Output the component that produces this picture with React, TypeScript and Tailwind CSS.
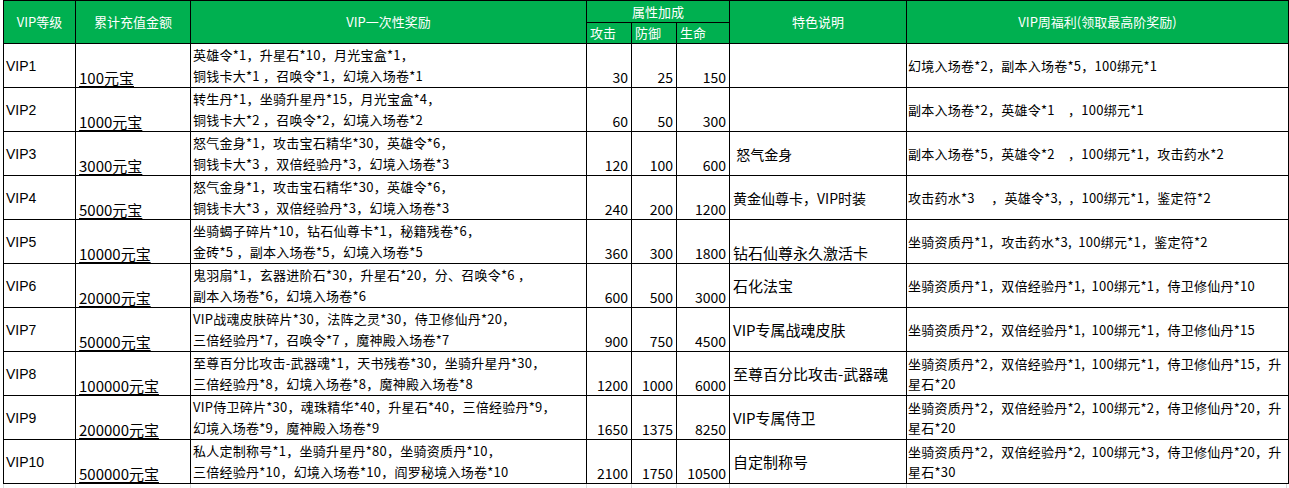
import React from "react";

type Row = {
  level: string;
  amount: string;
  reward: [string, string];
  atk: string;
  def: string;
  hp: string;
  feature: string;
  featureBottom?: boolean;
  featureSmall?: boolean;
  weekly: string[];
};

const rows: Row[] = [
  {
    level: "VIP1",
    amount: "100元宝",
    reward: ["英雄令*1，升星石*10，月光宝盒*1，", "铜钱卡大*1 ，召唤令*1，幻境入场卷*1"],
    atk: "30",
    def: "25",
    hp: "150",
    feature: "",
    weekly: ["幻境入场卷*2，副本入场卷*5，100绑元*1"],
  },
  {
    level: "VIP2",
    amount: "1000元宝",
    reward: ["转生丹*1，坐骑升星丹*15，月光宝盒*4，", "铜钱卡大*2 ，召唤令*2，幻境入场卷*2"],
    atk: "60",
    def: "50",
    hp: "300",
    feature: "",
    weekly: ["副本入场卷*2，英雄令*1　，100绑元*1"],
  },
  {
    level: "VIP3",
    amount: "3000元宝",
    reward: ["怒气金身*1，攻击宝石精华*30，英雄令*6，", "铜钱卡大*3 ，双倍经验丹*3，幻境入场卷*3"],
    atk: "120",
    def: "100",
    hp: "600",
    feature: " 怒气金身",
    featureSmall: true,
    weekly: ["副本入场卷*5，英雄令*2　，100绑元*1，攻击药水*2"],
  },
  {
    level: "VIP4",
    amount: "5000元宝",
    reward: ["怒气金身*1，攻击宝石精华*30，英雄令*6，", "铜钱卡大*3 ，双倍经验丹*3，幻境入场卷*3"],
    atk: "240",
    def: "200",
    hp: "1200",
    feature: "黄金仙尊卡，VIP时装",
    featureSmall: true,
    weekly: ["攻击药水*3　 ，英雄令*3,  ，100绑元*1，鉴定符*2"],
  },
  {
    level: "VIP5",
    amount: "10000元宝",
    reward: ["坐骑蝎子碎片*10，钻石仙尊卡*1，秘籍残卷*6，", "金砖*5 ，副本入场卷*5，幻境入场卷*5"],
    atk: "360",
    def: "300",
    hp: "1800",
    feature: "钻石仙尊永久激活卡",
    featureBottom: true,
    weekly: ["坐骑资质丹*1，攻击药水*3,  100绑元*1，鉴定符*2"],
  },
  {
    level: "VIP6",
    amount: "20000元宝",
    reward: ["鬼羽扇*1，玄器进阶石*30，升星石*20，分、召唤令*6 ，", "副本入场卷*6，幻境入场卷*6"],
    atk: "600",
    def: "500",
    hp: "3000",
    feature: "石化法宝",
    weekly: ["坐骑资质丹*1，双倍经验丹*1,  100绑元*1，侍卫修仙丹*10"],
  },
  {
    level: "VIP7",
    amount: "50000元宝",
    reward: ["VIP战魂皮肤碎片*30，法阵之灵*30，侍卫修仙丹*20，", "三倍经验丹*7，召唤令*7 ，魔神殿入场卷*7"],
    atk: "900",
    def: "750",
    hp: "4500",
    feature: "VIP专属战魂皮肤",
    weekly: ["坐骑资质丹*2，双倍经验丹*1,  100绑元*1，侍卫修仙丹*15"],
  },
  {
    level: "VIP8",
    amount: "100000元宝",
    reward: ["至尊百分比攻击-武器魂*1，天书残卷*30，坐骑升星丹*30，", "三倍经验丹*8，幻境入场卷*8，魔神殿入场卷*8"],
    atk: "1200",
    def: "1000",
    hp: "6000",
    feature: "至尊百分比攻击-武器魂",
    weekly: ["坐骑资质丹*2，双倍经验丹*1,  100绑元*1，侍卫修仙丹*15，升", "星石*20"],
  },
  {
    level: "VIP9",
    amount: "200000元宝",
    reward: ["VIP侍卫碎片*30，魂珠精华*40，升星石*40，三倍经验丹*9，", "幻境入场卷*9，魔神殿入场卷*9"],
    atk: "1650",
    def: "1375",
    hp: "8250",
    feature: "VIP专属侍卫",
    weekly: ["坐骑资质丹*2，双倍经验丹*2,  100绑元*2，侍卫修仙丹*20，升", "星石*20"],
  },
  {
    level: "VIP10",
    amount: "500000元宝",
    reward: ["私人定制称号*1，坐骑升星丹*80，坐骑资质丹*10，", "三倍经验丹*10，幻境入场卷*10，阎罗秘境入场卷*10"],
    atk: "2100",
    def: "1750",
    hp: "10500",
    feature: "自定制称号",
    weekly: ["坐骑资质丹*2，双倍经验丹*2,  100绑元*3，侍卫修仙丹*20，升", "星石*30"],
  },
];

const th =
  "border border-black bg-[#00b050] text-white font-normal text-[13px] leading-[20px] p-0 align-middle";

export default function App() {
  return (
    <div className="w-[1289px] h-[488px] bg-white font-['Noto_Sans_CJK_SC',sans-serif] text-black overflow-hidden">
      <div className="pl-[3px]">
        <table className="table-fixed border-collapse w-[1285px]">
          <colgroup>
            <col className="w-[72px]" />
            <col className="w-[115px]" />
            <col className="w-[396px]" />
            <col className="w-[45px]" />
            <col className="w-[45px]" />
            <col className="w-[53px]" />
            <col className="w-[177px]" />
            <col className="w-[382px]" />
          </colgroup>
          <thead>
            <tr className="h-[22px]">
              <th rowSpan={2} className={th + " text-center"}>VIP等级</th>
              <th rowSpan={2} className={th + " text-center"}>累计充值金额</th>
              <th rowSpan={2} className={th + " text-center"}>VIP一次性奖励</th>
              <th colSpan={3} className={th + " text-center h-[22px]"}>属性加成</th>
              <th rowSpan={2} className={th + " text-center"}>特色说明</th>
              <th rowSpan={2} className={th + " text-center"}>VIP周福利(领取最高阶奖励)</th>
            </tr>
            <tr className="h-[21px]">
              <th className={th + " text-left pl-[3px] h-[21px]"}>攻击</th>
              <th className={th + " text-left pl-[3px]"}>防御</th>
              <th className={th + " text-left pl-[3px]"}>生命</th>
            </tr>
          </thead>
          <tbody>
            {rows.map((r) => (
              <tr key={r.level} className="h-[44px]">
                <td className="border border-black p-0 pl-[2px] align-middle font-['Liberation_Sans','Noto_Sans_CJK_SC',sans-serif] text-[14px] leading-[18px]">
                  {r.level}
                </td>
                <td className="border border-black p-0 pl-[3px] align-bottom text-[15px] leading-[19px] underline underline-offset-[2px] decoration-1">
                  {r.amount}
                </td>
                <td className="border border-black p-0 pl-[2px] align-top text-[13px] leading-[21px] tracking-[0.25px] whitespace-pre overflow-hidden">
                  <div>{r.reward[0]}</div>
                  <div>{r.reward[1]}</div>
                </td>
                <td className="border border-black p-0 pr-[3px] align-bottom text-right text-[14px] leading-[19px]">
                  {r.atk}
                </td>
                <td className="border border-black p-0 pr-[3px] align-bottom text-right text-[14px] leading-[19px]">
                  {r.def}
                </td>
                <td className="border border-black p-0 pr-[3px] align-bottom text-right text-[14px] leading-[19px]">
                  {r.hp}
                </td>
                <td
                  className={
                    "border border-black p-0 pl-[3px] whitespace-pre overflow-hidden " +
                    (r.featureBottom ? "align-bottom leading-[20px] " : "align-middle leading-[20px] ") +
                    (r.featureSmall ? "text-[14px]" : "text-[15px]")
                  }
                >
                  {r.feature}
                </td>
                <td className="border border-black p-0 pl-[1px] align-middle text-[13px] leading-[20px] tracking-[0.25px] whitespace-pre overflow-hidden">
                  {r.weekly.map((w, i) => (
                    <div key={i}>{w}</div>
                  ))}
                </td>
              </tr>
            ))}
          </tbody>
        </table>
        <div className="flex h-[6px]">
          <div className="w-[72px] border-l border-[#d9d9d9]" />
          <div className="w-[115px] border-l border-[#d9d9d9]" />
          <div className="w-[396px] border-l border-[#d9d9d9]" />
          <div className="w-[45px] border-l border-[#d9d9d9]" />
          <div className="w-[45px] border-l border-[#d9d9d9]" />
          <div className="w-[53px] border-l border-[#d9d9d9]" />
          <div className="w-[177px] border-l border-[#d9d9d9]" />
          <div className="w-[381px] border-l border-r border-[#d9d9d9]" />
        </div>
      </div>
    </div>
  );
}
